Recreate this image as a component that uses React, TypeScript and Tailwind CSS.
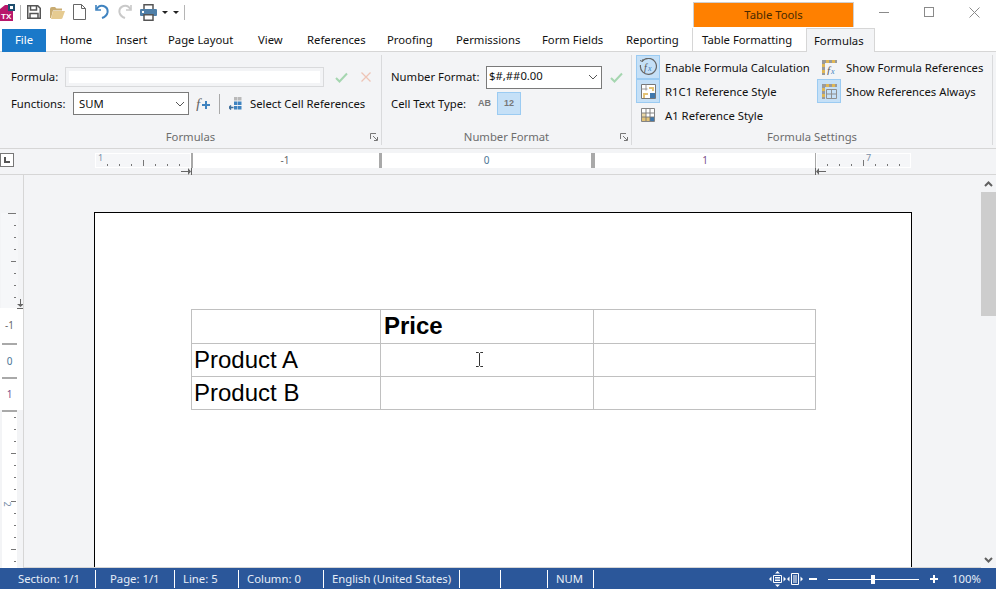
import React from "react";

const tabs = [
  { label: "Home", w: "w-[56px]" },
  { label: "Insert", w: "w-[52px]" },
  { label: "Page Layout", w: "w-[90px]" },
  { label: "View", w: "w-[49px]" },
  { label: "References", w: "w-[80px]" },
  { label: "Proofing", w: "w-[69px]" },
  { label: "Permissions", w: "w-[86px]" },
  { label: "Form Fields", w: "w-[84px]" },
  { label: "Reporting", w: "w-[80px]" },
];

const vTop = [false, false, false, true, false, false, false];
const vBottom = [false, false, false, true, false, false, false, true, false, false, false, true, false];

function Check() {
  return (
    <svg width="13" height="11" viewBox="0 0 13 11" fill="none">
      <path d="M1 6l3.500 3.500L12 1.500" stroke="#a5d6b0" strokeWidth="2" />
    </svg>
  );
}

function Chevron() {
  return (
    <svg width="10" height="6" viewBox="0 0 10 6" fill="none">
      <path d="M1 1l4 4 4-4" stroke="#555" strokeWidth="1" />
    </svg>
  );
}

function Launcher() {
  return (
    <svg width="8" height="8" viewBox="0 0 8 8" fill="none">
      <path d="M.5 6V.5H6" stroke="#777" />
      <path d="M3 3l4 4M7.500 4v3.500H4" stroke="#777" />
    </svg>
  );
}

function QuickAccess() {
  return (
    <div className="flex items-start h-[28px] w-[693px] shrink-0">
      <svg width="15" height="20" viewBox="0 0 15 20" className="mt-[1px]">
        <path d="M0 8l5-4h8v16H0z" fill="#b8176b" />
        <rect x="8" y="3" width="7" height="7" fill="#1f4e6e" />
        <rect x="10" y="5" width="3" height="3" fill="#fff" />
        <text x="1" y="18" fontSize="8" fontWeight="700" fill="#fff" fontFamily="Liberation Sans, sans-serif">TX</text>
      </svg>
      <div className="ml-[5px] mt-[5px]"><div className="w-px h-[15px] bg-[#b5b5b5]" /></div>
      <svg width="14" height="14" viewBox="0 0 14 14" fill="none" className="ml-[6px] mt-[5px]">
        <path d="M.75.75h10l2.500 2.500v10H.75z" stroke="#555" strokeWidth="1.500" />
        <path d="M3.500 1v4h6V1M3 13V8.500h8V13" stroke="#555" strokeWidth="1.500" />
      </svg>
      <svg width="15" height="12" viewBox="0 0 15 12" className="ml-[9px] mt-[7px]">
        <path d="M0 2q0-2 2-2h3l1.500 1.500H12v2H3L1 11H0z" fill="#c9ac72" />
        <path d="M3 4h12l-2.500 7q-.3 1-1.500 1H1z" fill="#e6cb91" />
      </svg>
      <svg width="13" height="16" viewBox="0 0 13 16" fill="none" className="ml-[8px] mt-[4px]">
        <path d="M.5.500h8l4 4v11H.5zM8.500.500v4h4" stroke="#666" />
      </svg>
      <svg width="14" height="15" viewBox="0 0 14 15" fill="none" className="ml-[9px] mt-[4px]">
        <path d="M1 1v5h5" stroke="#3f83c0" strokeWidth="1.600" />
        <path d="M1.500 5.500C3 2.500 6 1.300 8.500 2c3 1 4.500 3.500 4 6.500-.5 2.500-2.500 4.500-5.500 5.500" stroke="#3f83c0" strokeWidth="2" />
      </svg>
      <svg width="14" height="15" viewBox="0 0 14 15" fill="none" className="ml-[9px] mt-[4px]">
        <path d="M13 1v5H8" stroke="#c9c9c9" strokeWidth="1.600" />
        <path d="M12.500 5.500C11 2.500 8 1.300 5.500 2c-3 1-4.500 3.500-4 6.500.5 2.500 2.500 4.500 5.500 5.500" stroke="#c9c9c9" strokeWidth="2" />
      </svg>
      <svg width="17" height="17" viewBox="0 0 17 17" className="ml-[8px] mt-[4px]">
        <path d="M4 .75h9v5H4z" fill="#fff" stroke="#555" strokeWidth="1.500" />
        <rect x="0" y="5" width="17" height="7" rx="1" fill="#4f7fa8" />
        <rect x="2" y="7" width="2" height="2" fill="#fff" />
        <path d="M4 10.750h9v5.500H4z" fill="#fff" stroke="#555" strokeWidth="1.500" />
      </svg>
      <div className="ml-[5px] mt-[11px] w-0 h-0 border-x-[3px] border-x-transparent border-t-[3px] border-t-[#222]" />
      <div className="ml-[5px] mt-[11px] w-0 h-0 border-x-[3px] border-x-transparent border-t-[3px] border-t-[#222]" />
      <div className="ml-[5px] mt-[5px]"><div className="w-px h-[15px] bg-[#b5b5b5]" /></div>
    </div>
  );
}

function TitleBar() {
  return (
    <div className="flex h-[28px] bg-white">
      <QuickAccess />
      <div className="w-[161px] h-[25px] mt-[2px] flex items-center justify-center bg-[#ff8000] border-t border-x border-[#cfcfcf] text-[#4a2a00]">
        Table Tools
      </div>
      <div className="flex items-start ml-[25px] pt-[7px]">
        <div className="w-[10px] h-px bg-[#8a8a8a] mt-[5px]" />
        <div className="w-[10px] h-[10px] border border-[#8a8a8a] ml-[35px]" />
        <svg width="11" height="11" viewBox="0 0 11 11" fill="none" className="ml-[35px]">
          <path d="M.5.500l10 10M10.500.500l-10 10" stroke="#8a8a8a" />
        </svg>
      </div>
    </div>
  );
}

function TabRow() {
  return (
    <div className="flex h-[24px] bg-white border-b border-[#d6d6d6] pl-[2px]">
      <div className="w-[44px] h-[23px] mt-px flex items-center justify-center bg-[#1a79c9] text-white">File</div>
      {tabs.map((t) => (
        <div key={t.label} className={`${t.w} pl-[14px] pt-[1px] flex items-center text-[#111]`}>{t.label}</div>
      ))}
      <div className="w-[114px] pl-[9px] pt-[1px] flex items-center border-l border-[#d6d6d6] text-[#111]">Table Formatting</div>
      <div className="w-[69px] h-[24px] pl-[7px] pt-[1px] flex items-center bg-[#f3f4f6] border-t border-x border-[#d6d6d6] text-[#111]">Formulas</div>
    </div>
  );
}

function GroupLabel({ text, launcher }: { text: string; launcher?: boolean }) {
  return (
    <div className="relative h-[16px] shrink-0 flex items-center justify-center text-[#6d6d6d]">
      {text}
      {launcher && <span className="absolute right-[3px] top-[4px] flex"><Launcher /></span>}
    </div>
  );
}

function FormulasGroup() {
  return (
    <div className="w-[382px] flex flex-col border-r border-[#d9dadc] my-[3px]">
      <div className="flex-1 flex flex-col pt-[12px] pl-[11px]">
        <div className="flex items-center h-[20px]">
          <span className="w-[54px] pt-[1px]">Formula:</span>
          <div className="w-[259px] h-[20px] border border-[#d9dadc] p-[3px] bg-[#f3f4f6]"><div className="h-full bg-white" /></div>
          <span className="ml-[11px] flex"><Check /></span>
          <svg width="10" height="10" viewBox="0 0 10 10" fill="none" className="ml-[13px]">
            <path d="M.5.500l9 9M9.500.500l-9 9" stroke="#eec4b6" strokeWidth="1.300" />
          </svg>
        </div>
        <div className="flex items-center h-[23px] mt-[5px]">
          <span className="w-[62px] pt-[2px]">Functions:</span>
          <div className="w-[116px] h-[23px] border border-[#7a7a7a] bg-white flex items-center justify-between pl-[5px] pr-[3px] text-[#111]">
            <span className="pt-[2px]">SUM</span><Chevron />
          </div>
          <svg width="15" height="14" viewBox="0 0 15 14" className="ml-[7px]">
            <text x="0" y="12" fontSize="15" fontStyle="italic" fill="#666" fontFamily="Liberation Serif, serif">f</text>
            <path d="M6 8h8M10 4v8" stroke="#3f83c0" strokeWidth="2" />
          </svg>
          <div className="ml-[8px]"><div className="w-px h-[20px] bg-[#a9a9a9]" /></div>
          <svg width="13" height="13" viewBox="0 0 13 13" className="ml-[9px]">
            <path d="M5 0h3.500v3.500H5zM9 0h3.500v3.500H9z" fill="#b9b9b9" />
            <path d="M5 4.500h3.500V8H5zM9 4.500h3.500V8H9zM5 9h3.500v3.500H5zM9 9h3.500v3.500H9z" fill="#3f83c0" />
            <path d="M0 10.500h4.500M2 8.500l-2 2 2 2" stroke="#3f6f9c" strokeWidth="1.500" fill="none" />
          </svg>
          <span className="ml-[8px] pt-[2px]">Select Cell References</span>
        </div>
      </div>
      <GroupLabel text="Formulas" launcher />
    </div>
  );
}

function NumberGroup() {
  return (
    <div className="w-[250px] flex flex-col border-r border-[#d9dadc] my-[3px]">
      <div className="flex-1 flex flex-col pt-[11px] pl-[9px]">
        <div className="flex items-center h-[22px]">
          <span className="w-[95px] pt-[1px]">Number Format:</span>
          <div className="w-[116px] h-[23px] border border-[#7a7a7a] bg-white flex items-center justify-between pl-[2px] pr-[3px] text-[#111]">
            <span className="-mt-[2px]">$#,##0.00</span><Chevron />
          </div>
          <span className="ml-[8px] flex"><Check /></span>
        </div>
        <div className="flex items-center h-[23px] mt-[4px]">
          <span className="w-[87px] pt-[2px]">Cell Text Type:</span>
          <span className="w-[19px] text-[9px] font-bold text-[#777] [font-family:'Liberation_Sans',sans-serif]">AB</span>
          <div className="w-[24px] h-[23px] flex items-center justify-center bg-[#c5e0f7] border border-[#9bcbf2] text-[9px] font-bold text-[#777] [font-family:'Liberation_Sans',sans-serif]">12</div>
        </div>
      </div>
      <GroupLabel text="Number Format" launcher />
    </div>
  );
}

function IconBox({ on, children }: { on?: boolean; children: React.ReactNode }) {
  return (
    <div className={`w-[24px] h-[24px] flex items-center justify-center border ${on ? "bg-[#c5e0f7] border-[#9bcbf2]" : "border-transparent"}`}>
      {children}
    </div>
  );
}

function SettingItem({ on, icon, text }: { on?: boolean; icon: React.ReactNode; text: string }) {
  return (
    <div className="flex items-center h-[24px] text-[#111]">
      <IconBox on={on}>{icon}</IconBox>
      <span className="ml-[5px] pt-[2px]">{text}</span>
    </div>
  );
}

function FxIcon() {
  return (
    <svg width="18" height="18" viewBox="0 0 18 18" fill="none">
      <path d="M3 3.500A8 8 0 1 1 1.500 7" stroke="#666" strokeWidth="1.200" />
      <path d="M1 2.500l2.500 1 .5-2.500" stroke="#666" />
      <text x="5" y="13" fontSize="10" fontStyle="italic" fill="#555" fontFamily="Liberation Serif, serif">f</text>
      <text x="9" y="13" fontSize="8" fontStyle="italic" fill="#3f83c0" fontFamily="Liberation Serif, serif">x</text>
    </svg>
  );
}

function R1C1Icon() {
  return (
    <svg width="15" height="15" viewBox="0 0 15 15" fill="none">
      <path d="M.5.500h14v14H.5z" stroke="#777" fill="#fff" />
      <path d="M.5 5h6M5 .5v6" stroke="#999" />
      <path d="M8 3h5v4h-2V5H8z" fill="#e3c377" />
      <path d="M2 9h5v2H4v3H2z" fill="#e3c377" />
      <rect x="9" y="9" width="5" height="5" fill="#3f78ad" />
    </svg>
  );
}

function A1Icon() {
  return (
    <svg width="14" height="14" viewBox="0 0 14 14" fill="none">
      <rect x="1" y="1" width="12" height="12" fill="#fff" />
      <rect x="1" y="5" width="4" height="4" fill="#e9d6a5" />
      <rect x="1" y="9" width="8" height="4" fill="#e3c377" />
      <rect x="9" y="9" width="4" height="4" fill="#3f78ad" />
      <path d="M.5.500h13v13H.5zM5 1v12M9 1v12M1 5h12M1 9h12" stroke="#777" strokeWidth=".9" />
    </svg>
  );
}

function RefHeader() {
  return (
    <>
      <path d="M0 0h15v3H0zM0 3h3v12H0z" fill="#9a9a9a" />
      <path d="M4 0h3v3H4zM10 0h3v3h-3zM0 4h3v3H0zM0 10h3v3H0z" fill="#e0b755" />
    </>
  );
}

function RefFxIcon() {
  return (
    <svg width="15" height="15" viewBox="0 0 15 15" fill="none">
      <RefHeader />
      <text x="5" y="14" fontSize="11" fontStyle="italic" fill="#555" fontFamily="Liberation Serif, serif">f</text>
      <text x="9" y="14" fontSize="8" fontStyle="italic" fill="#3f83c0" fontFamily="Liberation Serif, serif">x</text>
    </svg>
  );
}

function RefGridIcon() {
  return (
    <svg width="15" height="15" viewBox="0 0 15 15" fill="none">
      <RefHeader />
      <path d="M4.500 5.500h10v9h-10zM9.500 5.500v9M4.500 10h10" stroke="#8f8f8f" />
    </svg>
  );
}

function SettingsGroup() {
  return (
    <div className="w-[361px] flex flex-col border-r border-[#d9dadc] my-[3px]">
      <div className="flex-1 flex pl-[4px]">
        <div className="w-[181px] flex flex-col">
          <SettingItem on icon={<FxIcon />} text="Enable Formula Calculation" />
          <SettingItem on icon={<R1C1Icon />} text="R1C1 Reference Style" />
          <SettingItem icon={<A1Icon />} text="A1 Reference Style" />
        </div>
        <div className="flex flex-col">
          <SettingItem icon={<RefFxIcon />} text="Show Formula References" />
          <SettingItem on icon={<RefGridIcon />} text="Show References Always" />
        </div>
      </div>
      <GroupLabel text="Formula Settings" />
    </div>
  );
}

function Ribbon() {
  return (
    <div className="flex h-[97px] shrink-0 bg-[#f3f4f6] border-b border-[#d6d6d6]">
      <FormulasGroup />
      <NumberGroup />
      <SettingsGroup />
    </div>
  );
}

function RulerTicks() {
  return (
    <div className="flex items-end gap-[11px]">
      {[2, 2, 2, 6, 2, 2, 2].map((h, i) => (
        <div key={i} className={`w-px bg-[#777] ${h === 6 ? "h-[6px]" : "h-[2px]"}`} />
      ))}
    </div>
  );
}

function HRuler() {
  return (
    <div className="relative flex h-[26px] shrink-0 bg-[#f3f4f6] border-b border-[#d6d6d6] pt-[4px]">
      <div className="w-[14px] h-[14px] border border-[#777] bg-white flex items-center justify-center">
        <div className="w-[6px] h-[6px] border-l-2 border-b-2 border-[#555]" />
      </div>
      <div className="w-[81px]" />
      <div className="relative w-[96px] h-[15px] bg-[#f5f6f8] border border-white flex items-end pl-[11px] pb-px">
        <RulerTicks />
        <span className="absolute left-[2px] -top-[1px] text-[9px] leading-[10px] text-[#7a8fa8]">1</span>
      </div>
      <div className="w-[2px] h-[15px] bg-[#a9a9a9]" />
      <div className="w-[623px] h-[15px] bg-white flex text-[#666] text-[10px] leading-[15px]">
        <div className="w-[186px] flex justify-center pr-[2px]">-1</div>
        <div className="w-[3px] bg-[#a9a9a9]" />
        <div className="w-[209px] flex justify-center text-[#4c7596]">0</div>
        <div className="w-[4px] bg-[#a9a9a9]" />
        <div className="flex-1 flex justify-center text-[#7a4f8a]">1</div>
        <div className="w-px bg-[#a9a9a9]" />
      </div>
      <div className="relative w-[95px] h-[15px] bg-[#f5f6f8] border border-white flex items-end pl-[10px] pb-px">
        <RulerTicks />
        <span className="absolute left-[49px] -top-[1px] text-[9px] leading-[10px] text-[#7a8fa8]">7</span>
      </div>
      <svg width="11" height="7" viewBox="0 0 11 7" className="absolute left-[181px] top-[19px]">
        <path d="M0 3h7V0l3 3.500-3 3.500V4H0zM10 0h1v7h-1z" fill="#666" />
      </svg>
      <svg width="11" height="7" viewBox="0 0 11 7" className="absolute left-[815px] top-[19px]">
        <path d="M11 3H4V0L1 3.500 4 7V4h7zM0 0h1v7H0z" fill="#666" />
      </svg>
    </div>
  );
}

function VTick({ long }: { long: boolean }) {
  return <div className={`h-px shrink-0 bg-[#777] ${long ? "w-[5px]" : "w-[2px]"}`} />;
}

function VRuler() {
  return (
    <div className="relative w-[23px] shrink-0 bg-[#f3f4f6] flex flex-col overflow-hidden">
      <div className="h-[95px] shrink-0 w-[17px] ml-px mt-[38px] bg-[#f6f7f9] flex flex-col items-end gap-[11px] pr-[2px]">
        <div className="h-px w-[8px] shrink-0 bg-[#777]" />
        {vTop.map((l, i) => <VTick key={i} long={l} />)}
      </div>
      <div className="w-[23px] h-[102px] shrink-0 bg-white flex flex-col items-center pl-[1px] pr-[5px] text-[10px] text-[#666]">
        <div className="h-[35px] shrink-0 flex items-center">-1</div>
        <div className="h-[2px] w-[15px] shrink-0 bg-[#a9a9a9]" />
        <div className="h-[32px] shrink-0 flex items-center text-[#4c7596]">0</div>
        <div className="h-[2px] w-[15px] shrink-0 bg-[#a9a9a9]" />
        <div className="h-[31px] shrink-0 flex items-center text-[#7a4f8a]">1</div>
      </div>
      <div className="h-[2px] w-[15px] ml-[2px] shrink-0 bg-[#a9a9a9]" />
      <div className="flex-1 w-[15px] ml-[2px] bg-white flex flex-col items-end gap-[11px] pt-[5px] pr-px">
        {vBottom.map((l, i) => <VTick key={i} long={l} />)}
      </div>
      <svg width="7" height="10" viewBox="0 0 7 10" className="absolute left-[17px] top-[124px]">
        <path d="M3 0h1v5h3L3.500 8 0 5h3zM0 9h7v1H0z" fill="#666" />
      </svg>
      <span className="absolute left-[4px] top-[325px] rotate-90 text-[9px] leading-[8px] text-[#7a8fa8]">2</span>
    </div>
  );
}

function DocTable() {
  return (
    <table className="table-fixed border-collapse w-[624px] ml-[96px] mt-[96px] text-[24px] leading-[28px] text-black [font-family:'Liberation_Sans',sans-serif]">
      <colgroup>
        <col className="w-[189px]" />
        <col className="w-[213px]" />
        <col className="w-[222px]" />
      </colgroup>
      <tbody>
        <tr className="h-[34px]">
          <td className="border border-[#c0c0c0] p-0 pl-[2px]" />
          <td className="border border-[#c0c0c0] p-0 pl-[3px] pb-[2px] font-bold">Price</td>
          <td className="border border-[#c0c0c0] p-0" />
        </tr>
        <tr className="h-[33px]">
          <td className="border border-[#c0c0c0] p-0 pl-[2px]">Product A</td>
          <td className="border border-[#c0c0c0] p-0" />
          <td className="border border-[#c0c0c0] p-0" />
        </tr>
        <tr className="h-[33px]">
          <td className="border border-[#c0c0c0] p-0 pl-[2px]">Product B</td>
          <td className="border border-[#c0c0c0] p-0" />
          <td className="border border-[#c0c0c0] p-0" />
        </tr>
      </tbody>
    </table>
  );
}

function Scrollbar() {
  return (
    <div className="w-[15px] shrink-0 bg-[#f3f4f6] flex flex-col">
      <div className="h-[17px] flex items-center justify-center">
        <svg width="9" height="6" viewBox="0 0 9 6" fill="none"><path d="M1 5l3.500-3.500L8 5" stroke="#606060" strokeWidth="2" /></svg>
      </div>
      <div className="h-[124px] bg-[#cdcdcd]" />
      <div className="flex-1" />
      <div className="h-[16px] flex items-center justify-center">
        <svg width="9" height="6" viewBox="0 0 9 6" fill="none"><path d="M1 1l3.500 3.500L8 1" stroke="#606060" strokeWidth="2" /></svg>
      </div>
    </div>
  );
}

function DocArea() {
  return (
    <div className="flex flex-1 min-h-0">
      <VRuler />
      <div className="relative flex-1 min-w-0 overflow-hidden bg-[#f3f4f6] border-l border-b border-[#d6d6d6]">
        <div className="w-[818px] h-[500px] ml-[70px] mt-[37px] bg-white border border-black">
          <DocTable />
        </div>
        <svg width="7" height="15" viewBox="0 0 7 15" fill="none" className="absolute left-[452px] top-[177px]">
          <path d="M0 .5h2.500L3.500 1.500 4.500.5H7M3.500 1.500v12M0 14.500h2.500l1-1 1 1H7" stroke="#333" />
        </svg>
      </div>
      <Scrollbar />
    </div>
  );
}

function StatusCell({ w, pl, text }: { w: string; pl: string; text?: string }) {
  return (
    <div className={`${w} ${pl} h-[18px] flex items-center border-r border-white text-[#e6edf7]`}>{text}</div>
  );
}

function StatusBar() {
  return (
    <div className="flex items-center h-[21px] shrink-0 pt-[1px] bg-[#2b579a]">
      <StatusCell w="w-[96px]" pl="pl-[18px]" text="Section: 1/1" />
      <StatusCell w="w-[79px]" pl="pl-[14px]" text="Page: 1/1" />
      <StatusCell w="w-[64px]" pl="pl-[8px]" text="Line: 5" />
      <StatusCell w="w-[85px]" pl="pl-[8px]" text="Column: 0" />
      <StatusCell w="w-[136px]" pl="pl-[8px]" text="English (United States)" />
      <StatusCell w="w-[41px]" pl="pl-0" />
      <StatusCell w="w-[47px]" pl="pl-0" />
      <StatusCell w="w-[46px]" pl="pl-[8px]" text="NUM" />
      <svg width="17" height="16" viewBox="0 0 17 16" fill="none" className="ml-[175px]">
        <path d="M4.500 4.500h8v7h-8zM6 6.500h5M6 8h5M6 9.500h5" stroke="#fff" />
        <path d="M8.500 0l2.500 2.500H6zM8.500 16L6 13.500h5zM0 8l2.500-2.500v5zM17 8l-2.500-2.500v5z" fill="#fff" />
      </svg>
      <svg width="16" height="12" viewBox="0 0 16 12" fill="none" className="ml-[1px]">
        <path d="M4.500.5h7v11h-7zM6 3h4M6 5h4M6 7h4M6 9h4" stroke="#fff" />
        <path d="M0 6l2.500-2.500v5zM16 6l-2.500-2.500v5z" fill="#fff" />
      </svg>
      <div className="w-[8px] h-[2px] bg-white ml-[6px]" />
      <div className="relative w-[91px] h-px bg-white ml-[11px]">
        <div className="absolute left-[43px] -top-[4px] w-[4px] h-[9px] bg-white" />
      </div>
      <svg width="8" height="8" viewBox="0 0 8 8" className="ml-[11px]"><path d="M0 3h3V0h2v3h3v2H5v3H3V5H0z" fill="#fff" /></svg>
      <span className="ml-[14px] text-[#e6edf7]">100%</span>
    </div>
  );
}

export default function App() {
  return (
    <div className="w-[996px] h-[589px] flex flex-col overflow-hidden bg-white text-[11.3px] text-[#111] [font-family:'Noto_Sans',sans-serif]">
      <TitleBar />
      <TabRow />
      <Ribbon />
      <HRuler />
      <DocArea />
      <StatusBar />
    </div>
  );
}
